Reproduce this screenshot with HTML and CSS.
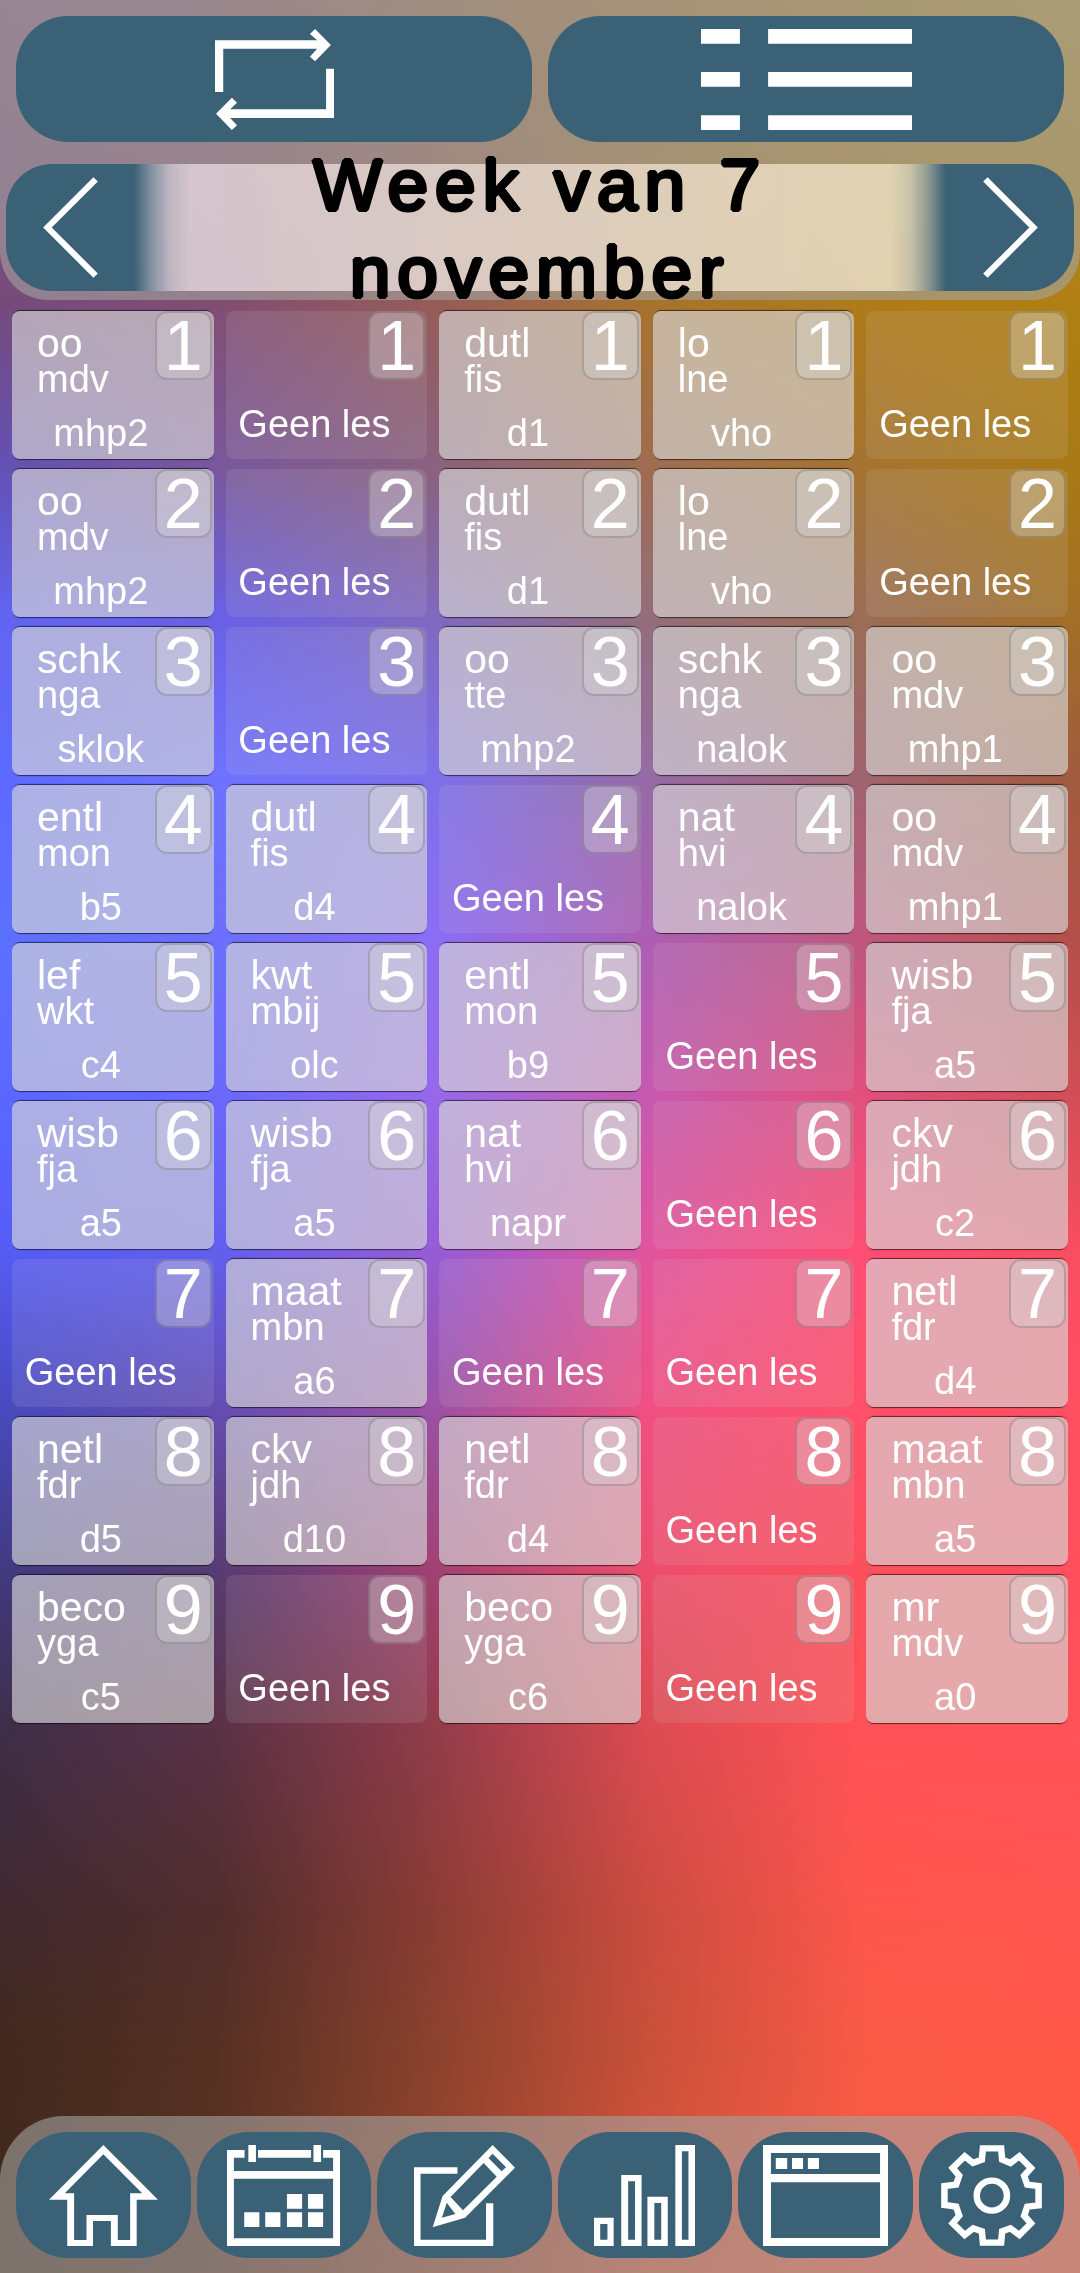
FILE: index.html
```html
<!DOCTYPE html>
<html lang="nl">
<head>
<meta charset="utf-8">
<meta name="viewport" content="width=device-width, initial-scale=1">
<title>Rooster</title>
<link rel="stylesheet" href="styles.css">
</head>
<body>
<div class="backdrop" aria-hidden="true">
  <div class="band band-0"></div><div class="band band-1"></div><div class="band band-2"></div>
  <div class="band band-3"></div><div class="band band-4"></div><div class="band band-5"></div>
  <div class="band band-6"></div><div class="band band-7"></div><div class="band band-8"></div>
  <div class="band band-9"></div><div class="band band-10"></div><div class="band band-11"></div>
  <div class="band band-12"></div><div class="band band-13"></div>
</div>

<header class="top">
  <div class="actions">
    <button class="pill" type="button" aria-label="Vernieuwen">
      <svg width="119" height="101" viewBox="621 84 346 303" preserveAspectRatio="none" fill="#fff">
        <path d="M621 118H918L897 99L912 84L958 132L912 181L897 167L918 143H645V273H621Z"/>
        <path d="M967 203V351H665L685 373L670 387L624 338L670 290L685 305L665 325H944V203Z"/>
      </svg>
    </button>
    <button class="pill" type="button" aria-label="Lijst">
      <svg width="211" height="101" viewBox="467 84 613 303" preserveAspectRatio="none" fill="#fff">
        <path d="M467 84h113v44h-113zM662 84h418v44h-418zM467 213h113v44h-113zM662 213h418v44h-418zM467 343h113v44h-113zM662 343h418v44h-418z"/>
      </svg>
    </button>
  </div>
  <div class="week">
    <button class="step step-prev" type="button" aria-label="Vorige week">
      <svg width="55" height="101" viewBox="122 531 160 302" preserveAspectRatio="none" fill="none" stroke="#fff" stroke-width="18"><path d="M275 538L135 682L275 826"/></svg>
    </button>
    <h1 class="week-title">Week van 7 november</h1>
    <button class="step step-next" type="button" aria-label="Volgende week">
      <svg width="55" height="101" viewBox="0 531 160 302" preserveAspectRatio="none" fill="none" stroke="#fff" stroke-width="18"><path d="M7 538L147 682L7 826"/></svg>
    </button>
  </div>
</header>

<main>
<table class="timetable">
<tbody>
<tr>
  <td class="lesson"><b>1</b><p>oo</p><p>mdv</p><p>mhp2</p></td>
  <td class="free"><b>1</b><p>Geen les</p></td>
  <td class="lesson"><b>1</b><p>dutl</p><p>fis</p><p>d1</p></td>
  <td class="lesson"><b>1</b><p>lo</p><p>lne</p><p>vho</p></td>
  <td class="free"><b>1</b><p>Geen les</p></td>
</tr>
<tr>
  <td class="lesson"><b>2</b><p>oo</p><p>mdv</p><p>mhp2</p></td>
  <td class="free"><b>2</b><p>Geen les</p></td>
  <td class="lesson"><b>2</b><p>dutl</p><p>fis</p><p>d1</p></td>
  <td class="lesson"><b>2</b><p>lo</p><p>lne</p><p>vho</p></td>
  <td class="free"><b>2</b><p>Geen les</p></td>
</tr>
<tr>
  <td class="lesson"><b>3</b><p>schk</p><p>nga</p><p>sklok</p></td>
  <td class="free"><b>3</b><p>Geen les</p></td>
  <td class="lesson"><b>3</b><p>oo</p><p>tte</p><p>mhp2</p></td>
  <td class="lesson"><b>3</b><p>schk</p><p>nga</p><p>nalok</p></td>
  <td class="lesson"><b>3</b><p>oo</p><p>mdv</p><p>mhp1</p></td>
</tr>
<tr>
  <td class="lesson"><b>4</b><p>entl</p><p>mon</p><p>b5</p></td>
  <td class="lesson"><b>4</b><p>dutl</p><p>fis</p><p>d4</p></td>
  <td class="free"><b>4</b><p>Geen les</p></td>
  <td class="lesson"><b>4</b><p>nat</p><p>hvi</p><p>nalok</p></td>
  <td class="lesson"><b>4</b><p>oo</p><p>mdv</p><p>mhp1</p></td>
</tr>
<tr>
  <td class="lesson"><b>5</b><p>lef</p><p>wkt</p><p>c4</p></td>
  <td class="lesson"><b>5</b><p>kwt</p><p>mbij</p><p>olc</p></td>
  <td class="lesson"><b>5</b><p>entl</p><p>mon</p><p>b9</p></td>
  <td class="free"><b>5</b><p>Geen les</p></td>
  <td class="lesson"><b>5</b><p>wisb</p><p>fja</p><p>a5</p></td>
</tr>
<tr>
  <td class="lesson"><b>6</b><p>wisb</p><p>fja</p><p>a5</p></td>
  <td class="lesson"><b>6</b><p>wisb</p><p>fja</p><p>a5</p></td>
  <td class="lesson"><b>6</b><p>nat</p><p>hvi</p><p>napr</p></td>
  <td class="free"><b>6</b><p>Geen les</p></td>
  <td class="lesson"><b>6</b><p>ckv</p><p>jdh</p><p>c2</p></td>
</tr>
<tr>
  <td class="free"><b>7</b><p>Geen les</p></td>
  <td class="lesson"><b>7</b><p>maat</p><p>mbn</p><p>a6</p></td>
  <td class="free"><b>7</b><p>Geen les</p></td>
  <td class="free"><b>7</b><p>Geen les</p></td>
  <td class="lesson"><b>7</b><p>netl</p><p>fdr</p><p>d4</p></td>
</tr>
<tr>
  <td class="lesson"><b>8</b><p>netl</p><p>fdr</p><p>d5</p></td>
  <td class="lesson"><b>8</b><p>ckv</p><p>jdh</p><p>d10</p></td>
  <td class="lesson"><b>8</b><p>netl</p><p>fdr</p><p>d4</p></td>
  <td class="free"><b>8</b><p>Geen les</p></td>
  <td class="lesson"><b>8</b><p>maat</p><p>mbn</p><p>a5</p></td>
</tr>
<tr>
  <td class="lesson"><b>9</b><p>beco</p><p>yga</p><p>c5</p></td>
  <td class="free"><b>9</b><p>Geen les</p></td>
  <td class="lesson"><b>9</b><p>beco</p><p>yga</p><p>c6</p></td>
  <td class="free"><b>9</b><p>Geen les</p></td>
  <td class="lesson"><b>9</b><p>mr</p><p>mdv</p><p>a0</p></td>
</tr>
</tbody>
</table>
</main>

<nav class="bottom">
  <a class="pill" href="#home" aria-label="Home">
    <svg width="109" height="101" viewBox="139 135 317 303" preserveAspectRatio="none" fill="#fff" fill-rule="evenodd">
      <path d="M297 135L456 299H394V438H319V363H267V438H192V299H139ZM297 163L185 280H212V420H248V345H339V420H375V280H410Z"/>
    </svg>
  </a>
  <a class="pill" href="#rooster" aria-label="Rooster">
    <svg width="113" height="101" viewBox="659 135 328 303" preserveAspectRatio="none" fill="#fff">
      <path d="M659 150h51v23h-31v40h288v-40h-29v-23h49v288h-328zM679 236v179h288v-179z" fill-rule="evenodd"/>
      <path d="M749 150h154v23h-154zM721 135h22v51h-22zM910 135h22v51h-22zM833 282h44v44h-44zM894 282h44v44h-44zM709 337h44v44h-44zM770 337h44v44h-44zM833 337h44v44h-44zM894 337h44v44h-44z"/>
    </svg>
  </a>
  <a class="pill" href="#notities" aria-label="Notities">
    <svg width="101" height="101" viewBox="1202 135 293 303" preserveAspectRatio="none" fill="#fff" fill-rule="evenodd">
      <path d="M1328 202H1202V438H1432V310H1411V419H1221V221H1328Z"/>
      <path d="M1430 135L1495 203L1350 353L1256 382L1285 288ZM1430 161L1418 174L1456 214L1469 202ZM1404 189L1308 291L1344 331L1442 230ZM1297 308L1283 353L1322 342Z"/>
    </svg>
  </a>
  <a class="pill" href="#cijfers" aria-label="Cijfers">
    <svg width="101" height="101" viewBox="157 135 293 303" preserveAspectRatio="none" fill="#fff" fill-rule="evenodd">
      <path d="M157 353H214V438H157ZM175 372V419H196V372ZM236 225H295V438H236ZM256 244V419H276V244ZM312 290H371V438H312ZM332 309V419H352V309ZM393 135H450V438H393ZM412 154V419H431V154Z"/>
    </svg>
  </a>
  <a class="pill" href="#venster" aria-label="Venster">
    <svg width="125" height="101" viewBox="648 135 362 303" preserveAspectRatio="none" fill="#fff" fill-rule="evenodd">
      <path d="M648 135H1010V438H648ZM671 159V222H987V159ZM671 247V414H987V247Z"/>
      <path d="M685 174h33v33h-33zM732 174h32v33h-32zM778 174h32v33h-32z"/>
    </svg>
  </a>
  <a class="pill" href="#instellingen" aria-label="Instellingen">
    <svg width="101" height="101" viewBox="1164 135 294 303" preserveAspectRatio="none" fill="none" stroke="#fff" stroke-width="19">
      <path d="M1286 145H1339L1342 179L1366 189L1392 169L1426 204L1406 227L1415 254L1448 258V316L1415 320L1406 347L1426 370L1392 405L1366 385L1342 394L1339 428H1286L1283 394L1258 385L1233 405L1198 370L1217 347L1208 320L1174 315V258L1208 254L1217 227L1198 204L1233 169L1257 189L1283 179Z"/>
      <ellipse cx="1312" cy="287" rx="44" ry="45"/>
    </svg>
  </a>
</nav>
</body>
</html>
```
FILE: styles.css
```css
* { box-sizing: border-box; }

body {
  margin: 0;
  min-height: 100vh;
  display: flex;
  flex-direction: column;
  font-family: "Liberation Sans", Arial, sans-serif;
  color: #fff;
}

p, h1 { margin: 0; }
button { border: 0; padding: 0; font: inherit; color: inherit; cursor: pointer; }
svg { display: block; flex: none; }

/* Backdrop: horizontal colour bands, each fading in over the one above */
.backdrop {
  position: fixed;
  inset: 0;
  z-index: -1;
  display: grid;
}
.band {
  grid-area: 1 / 1;
  background: linear-gradient(90deg, var(--c));
  mask-image: linear-gradient(transparent var(--from), #000 var(--to));
}
.band-0 { --c: rgb(135,90,130), rgb(140,95,115), rgb(153,108,80), rgb(165,122,60), rgb(175,138,55), rgb(180,148,55); mask-image: none; }
.band-1 { --from: 0%; --to: 13%; --c: rgb(118,75,122), rgb(130,78,112), rgb(150,92,88), rgb(168,115,45), rgb(176,124,25), rgb(176,128,20); }
.band-2 { --from: 13%; --to: 21%; --c: rgb(98,82,185), rgb(120,88,160), rgb(138,98,130), rgb(158,108,85), rgb(165,115,50), rgb(168,122,22); }
.band-3 { --from: 21%; --to: 27%; --c: rgb(98,100,240), rgb(106,96,228), rgb(128,105,190), rgb(148,110,120), rgb(155,110,85), rgb(162,112,38); }
.band-4 { --from: 27%; --to: 34%; --c: rgb(92,106,255), rgb(110,114,255), rgb(125,112,235), rgb(148,108,165), rgb(160,100,110), rgb(160,92,60); }
.band-5 { --from: 34%; --to: 41%; --c: rgb(92,112,255), rgb(108,112,255), rgb(138,110,245), rgb(172,95,180), rgb(190,88,125), rgb(178,80,72); }
.band-6 { --from: 41%; --to: 48%; --c: rgb(90,104,255), rgb(106,105,255), rgb(150,105,235), rgb(198,90,175), rgb(225,80,125), rgb(208,78,85); }
.band-7 { --from: 48%; --to: 55%; --c: rgb(86,92,245), rgb(98,95,238), rgb(150,92,215), rgb(225,84,158), rgb(255,78,115), rgb(248,78,95); }
.band-8 { --from: 55%; --to: 62%; --c: rgb(72,74,190), rgb(100,78,178), rgb(155,82,165), rgb(240,80,130), rgb(255,80,105), rgb(255,80,98); }
.band-9 { --from: 62%; --to: 69%; --c: rgb(66,58,130), rgb(86,60,115), rgb(160,66,115), rgb(238,78,108), rgb(252,80,92), rgb(255,80,92); }
.band-10 { --from: 69%; --to: 76%; --c: rgb(62,46,72), rgb(90,50,70), rgb(145,60,75), rgb(220,75,82), rgb(255,82,88), rgb(255,82,90); }
.band-11 { --from: 76%; --to: 84%; --c: rgb(64,42,48), rgb(80,45,45), rgb(138,60,52), rgb(203,76,64), rgb(253,86,76), rgb(255,85,80); }
.band-12 { --from: 84%; --to: 90%; --c: rgb(66,42,30), rgb(85,48,35), rgb(138,66,45), rgb(200,80,58), rgb(248,90,70), rgb(255,88,72); }
.band-13 { --from: 90%; --to: 100%; --c: rgb(66,42,30), rgb(90,50,38), rgb(150,68,46), rgb(215,85,58), rgb(250,92,68), rgb(255,92,68); }

.pill {
  display: flex;
  align-items: center;
  justify-content: center;
  height: 126px;
  border-radius: 52px;
  background: #3a6175;
}

/* Header */
.top {
  display: flex;
  flex-direction: column;
  gap: 22px;
  padding: 16px 6px 9px;
  margin-bottom: 1px;
  border-radius: 0 0 48px 48px;
  background: rgba(164, 164, 160, .6);
}
.actions {
  display: grid;
  grid-template-columns: 1fr 1fr;
  gap: 16px;
  padding: 0 10px;
}
.week {
  display: grid;
  grid-template: 127px / 128px 1fr 128px;
}
.step {
  display: flex;
  align-items: center;
  justify-content: center;
  background: #3a6175;
}
.step-prev { border-radius: 46px 0 0 46px; }
.step-next { border-radius: 0 46px 46px 0; }
.week-title {
  display: flex;
  align-items: center;
  justify-content: center;
  min-width: 0;
  padding: 0 140px;
  background:
    linear-gradient(90deg, #3a6175, rgba(58,97,117,.5) 18px, rgba(58,97,117,.14) 36px, rgba(58,97,117,0) 56px),
    linear-gradient(270deg, #3a6175, rgba(58,97,117,.5) 18px, rgba(58,97,117,.14) 36px, rgba(58,97,117,0) 56px),
    linear-gradient(90deg, rgba(253,240,250,.6), rgba(255,243,213,.65));
  color: #000;
  font-size: 73px;
  font-weight: 400;
  line-height: 87px;
  letter-spacing: 7px;
  text-align: center;
  text-shadow: 2px 0 #000, -2px 0 #000, 0 2px #000, 0 -2px #000,
    1px 1px #000, -1px 1px #000, 1px -1px #000, -1px -1px #000;
}

/* Timetable */
.timetable {
  width: 100%;
  table-layout: fixed;
  border-collapse: separate;
  border-spacing: 12px 10px;
}
.timetable td {
  position: relative;
  height: 148px;
  padding: 14px 24px 0 25px;
  border-radius: 8px;
  vertical-align: top;
  font-size: 38px;
  line-height: 36px;
  white-space: nowrap;
}
.timetable b {
  position: absolute;
  top: 0;
  right: 2px;
  width: 57px;
  height: 69px;
  border: 2px solid rgba(0, 0, 0, .16);
  border-radius: 12px;
  background: rgba(215, 215, 215, .36);
  font-size: 70px;
  font-weight: 400;
  line-height: 66px;
  text-align: center;
}
.lesson {
  background: rgba(215, 215, 215, .65);
  box-shadow: 0 2px 1px -1px rgba(0, 0, 0, .6), 0 -2px 1px -1px rgba(0, 0, 0, .6);
}
.free { background: rgba(215, 215, 215, .12); }
.lesson p:nth-of-type(1) { font-size: 41px; }
.lesson p:nth-of-type(3) {
  margin: 14px 0 0 -25px;
  line-height: 44px;
  text-align: center;
}
.free p {
  margin: 77px 0 0 -25px;
  line-height: 44px;
  text-align: center;
}

/* Bottom navigation */
.bottom {
  display: grid;
  grid-template-columns: repeat(5, 6fr) 5fr;
  gap: 6px;
  margin-top: auto;
  padding: 16px 16px 15px;
  border-radius: 64px 64px 0 0;
  background: rgba(164, 164, 160, .6);
}
```
